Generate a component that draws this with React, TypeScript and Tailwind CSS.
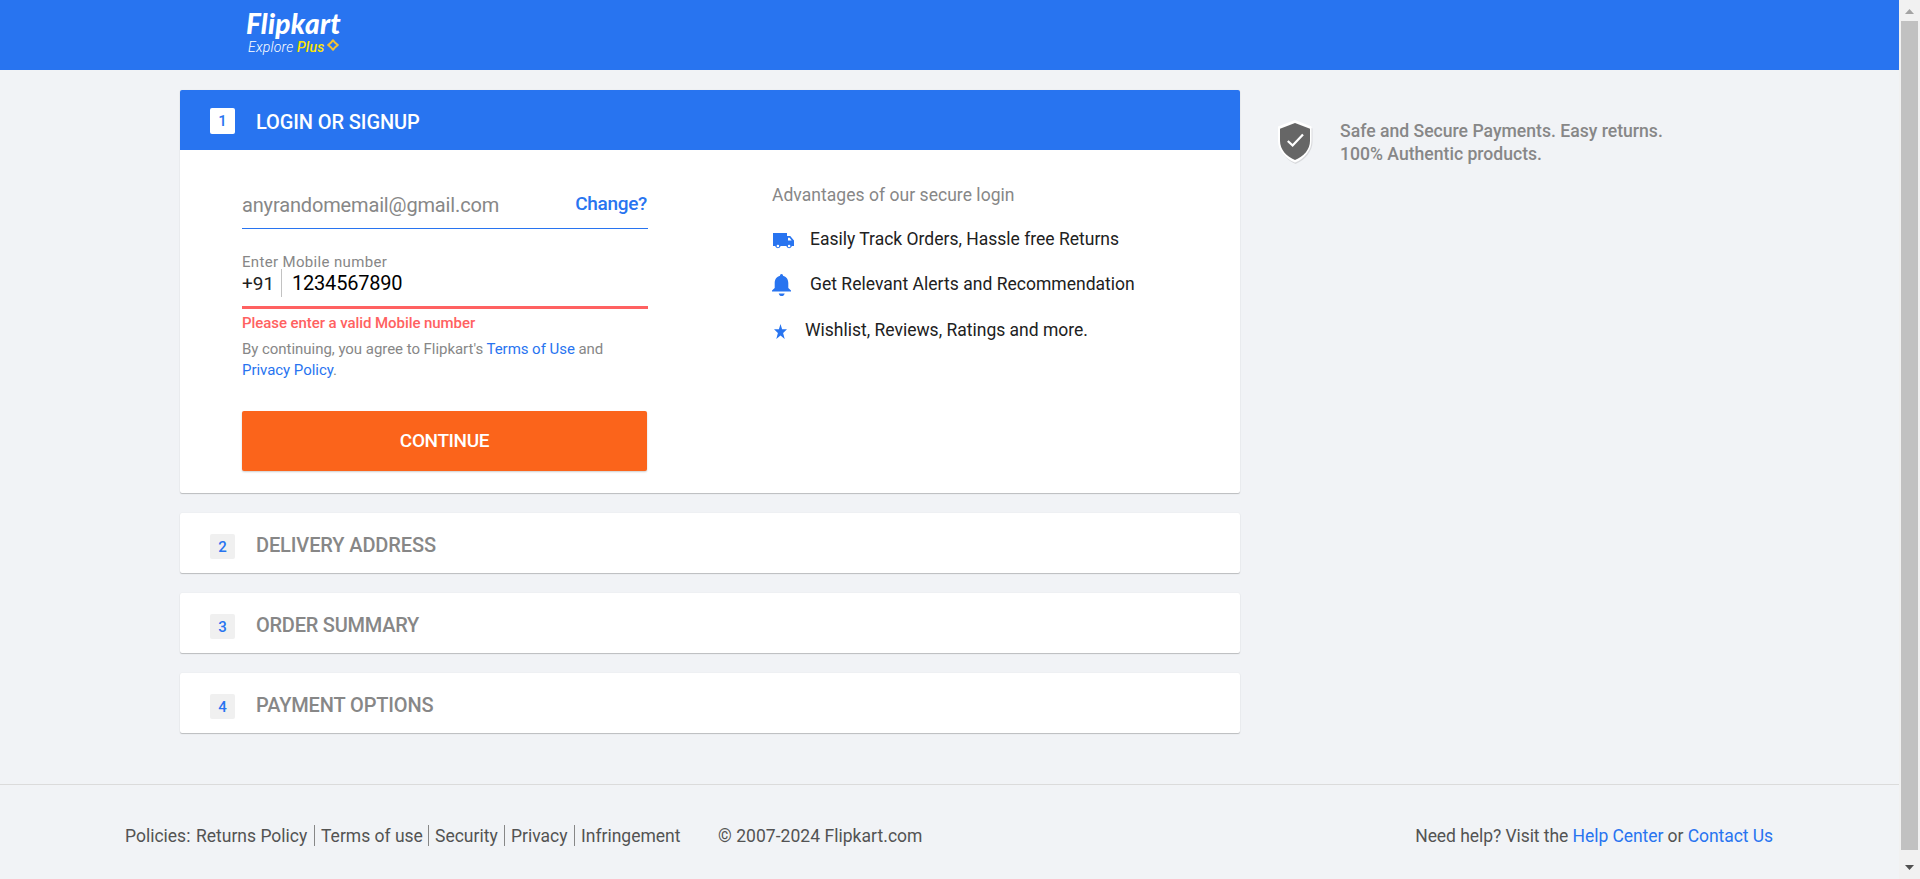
import React from "react";

const TRUCK = "M0 0H14V3H17.2L21 7.6V13H18.9A2.9 2.9 0 0 1 13.3 13H7.7A2.9 2.9 0 0 1 2.1 13H0Z";

function Header() {
  return (
    <header className="h-[70px] bg-[#2874f0] pl-[246px] pt-[10px] italic">
      <div className="h-[29px] whitespace-nowrap font-['Lato'] text-[28px] font-black leading-[27px] tracking-[0.3px] text-white">
        Flipkart
      </div>
      <div className="flex h-[16px] items-start whitespace-nowrap pl-[2px] text-[14px] leading-[16px]">
        <span className="w-[49px] font-light tracking-[0.2px] text-white">Explore</span>
        <span className="w-[30px] font-medium tracking-[0.2px] text-[#ffe500]">Plus</span>
        <svg width="12" height="12" viewBox="0 0 12 12" fill="none" stroke="#f2c233" strokeWidth="2" strokeLinejoin="round">
          <path d="M6 1.2L8.2 3.8L10.8 6L8.2 8.2L6 10.8L3.8 8.2L1.2 6L3.8 3.8Z" />
        </svg>
      </div>
    </header>
  );
}

const cardShadow = "rounded-[2px] bg-white shadow-[0_1px_1px_0_rgba(0,0,0,0.22),0_0_2px_0_rgba(0,0,0,0.06)]";

function Step({ n, title, tracking }: { n: number; title: string; tracking: string }) {
  return (
    <section className={`mt-5 flex h-[60px] pl-[30px] ${cardShadow}`}>
      <span className="mt-[21px] flex h-[25px] w-[25px] justify-center rounded-[2px] bg-[#f0f0f0] text-[15px] font-medium leading-[26px] text-[#2874f0]">
        {n}
      </span>
      <h2 className={`ml-[21px] mt-[20px] text-[20px] font-medium leading-[24px] text-[#878787] ${tracking}`}>{title}</h2>
    </section>
  );
}

function LoginForm() {
  return (
    <div className="w-[406px] whitespace-nowrap">
      <div className="flex h-[79px] items-start justify-between border-b border-[#2874f0] pt-[43px] leading-[24px]">
        <span className="text-[20px] tracking-[-0.15px] text-[#878787]">anyrandomemail@gmail.com</span>
        <span className="-mt-px mr-px text-[19px] font-medium tracking-[-0.3px] text-[#2874f0]">Change?</span>
      </div>
      <div className="mt-[24px] h-[16px] text-[15px] leading-[18px] tracking-[0.34px] text-[#878787]">Enter Mobile number</div>
      <div className="flex h-[40px] border-b-[3px] border-[#ff6161] leading-[24px]">
        <span className="mt-[3px] h-[24px] w-[39px] text-[19px] text-[#212121]">+91</span>
        <span className="h-[28px] w-px bg-[#c2c2c2]" />
        <span className="ml-[10px] mt-[2px] text-[20px] tracking-[-0.2px] text-black">1234567890</span>
      </div>
      <div className="mt-[5px] h-[18px] text-[15px] font-medium leading-[18px] tracking-[-0.07px] text-[#ff6161]">
        Please enter a valid Mobile number
      </div>
      <p className="mt-[7px] text-[15px] leading-[21px] tracking-[-0.04px] text-[#878787]">
        By continuing, you agree to Flipkart's <span className="text-[#2874f0]">Terms of Use</span> and
        <br />
        <span className="text-[#2874f0]">Privacy Policy</span>.
      </p>
      <button className="mt-[30px] block h-[60px] w-[405px] rounded-[2px] bg-[#fb641b] text-[19px] font-medium leading-[58px] tracking-[-0.38px] text-white shadow-[0_1px_2px_0_rgba(0,0,0,0.2)]">
        CONTINUE
      </button>
    </div>
  );
}

function Advantages() {
  return (
    <div className="ml-[124px] whitespace-nowrap pt-[33px] text-[17.5px] leading-[24px] text-[#212121]">
      <div className="tracking-[0.04px] text-[#878787]">Advantages of our secure login</div>
      <div className="mt-[20px] flex h-[24px]">
        <svg className="ml-px mt-[6px]" width="21" height="16" viewBox="0 0 21 16">
          <path d={TRUCK} fill="#2874f0" />
          <path d="M15 4.8H16.6L18.6 7.6H15Z" fill="#fff" />
          <circle cx="4.9" cy="13" r="1.3" fill="#fff" />
          <circle cx="16.1" cy="13" r="1.3" fill="#fff" />
        </svg>
        <span className="ml-[16px]">Easily Track Orders, Hassle free Returns</span>
      </div>
      <div className="mt-[21px] flex h-[24px]">
        <svg className="mt-[2px]" width="19" height="22" viewBox="0 0 19 22" fill="#2874f0">
          <path d="M9.5 0C10.5 0 11 .7 11 1.8C14.3 2.6 16.3 5.5 16.3 9V14L19 16.6V17.6H0V16.6L2.7 14V9C2.7 5.5 4.7 2.6 8 1.8C8 .7 8.5 0 9.5 0ZM6.7 19.4H12.7C12.3 21 11.2 22 9.7 22C8.2 22 7.1 21 6.7 19.4Z" />
        </svg>
        <span className="ml-[19px] tracking-[0.02px]">Get Relevant Alerts and Recommendation</span>
      </div>
      <div className="mt-[22px] flex h-[24px]">
        <svg className="ml-[2px] mt-[6px]" width="13" height="15" viewBox="0 0 13 15" fill="#2874f0">
          <path d="M6.5 0L8.1 5.3H13L9.1 8.9L10.7 15L6.5 11.4L2.3 15L3.9 8.9L0 5.3H4.9Z" />
        </svg>
        <span className="ml-[18px]">Wishlist, Reviews, Ratings and more.</span>
      </div>
    </div>
  );
}

function SafeBadge() {
  return (
    <aside className="ml-[37px] mt-[29px] flex">
      <svg width="37" height="46" viewBox="0 0 37 46">
        <path d="M18.5 3L35.5 9.5V23C35.5 32 28 41 18.5 45C9 41 2.5 32 2.5 23V9.5Z" fill="#d9dadd" />
        <path d="M18 1L34.5 7.5V22C34.5 31 27.5 40 18 43.5C8.5 40 1 31 1 22V7.5Z" fill="#fff" />
        <path d="M18 4L33 9.7V22C33 30.5 26.5 37.5 18 41C9.5 37.5 3 30.5 3 22V9.7Z" fill="#666" />
        <path d="M10.8 22L15.6 26.5L26 15.5" fill="none" stroke="#fff" strokeWidth="2.3" />
      </svg>
      <p className="ml-[26px] mt-px whitespace-nowrap text-[17.6px] font-medium leading-[23px] text-[#878787]">
        Safe and Secure Payments. Easy returns.
        <br />
        100% Authentic products.
      </p>
    </aside>
  );
}

function Footer() {
  const item = "mr-[6px] h-[21px] border-r border-[#878787]";
  return (
    <footer className="mt-[51px] flex h-[95px] items-start justify-between whitespace-nowrap border-t border-[#dbdbdb] pl-[125px] pr-[126px] pt-[40px] text-[17.5px] leading-[23px] text-[#535353]">
      <div className="flex">
        <span className="w-[71px]">Policies:</span>
        <span className={`w-[119px] ${item}`}>Returns Policy</span>
        <span className={`w-[108px] ${item}`}>Terms of use</span>
        <span className={`w-[70px] ${item}`}>Security</span>
        <span className={`w-[64px] ${item}`}>Privacy</span>
        <span className="w-[137px]">Infringement</span>
        <span className="tracking-[0.04px]">© 2007-2024 Flipkart.com</span>
      </div>
      <div className="tracking-[-0.06px]">
        Need help? Visit the <span className="text-[#2874f0]">Help Center</span> or <span className="text-[#2874f0]">Contact Us</span>
      </div>
    </footer>
  );
}

function Scrollbar() {
  return (
    <div className="flex w-[21px] shrink-0 flex-col items-center bg-[#f1f1f1]">
      <div className="h-[21px] pt-[9px]">
        <svg width="9" height="5" viewBox="0 0 9 5" fill="#a3a3a3"><path d="M4.5 0L9 5H0Z" /></svg>
      </div>
      <div className="h-[829px] w-[17px] bg-[#c1c1c1]" />
      <div className="pt-[15px]">
        <svg width="9" height="5" viewBox="0 0 9 5" fill="#505050"><path d="M4.5 5L9 0H0Z" /></svg>
      </div>
    </div>
  );
}

export default function App() {
  return (
    <div className="flex h-[879px] w-[1920px] overflow-hidden bg-[#f1f3f6] font-['Roboto',sans-serif]">
      <div className="w-[1899px]">
        <Header />
        <div className="flex pl-[180px] pt-5">
          <main className="w-[1060px]">
            <section className={`h-[403px] ${cardShadow}`}>
              <div className="flex h-[60px] rounded-t-[2px] bg-[#2874f0] pl-[30px]">
                <span className="mt-[18px] flex h-[26px] w-[25px] justify-center rounded-[2px] bg-white text-[15px] font-medium leading-[26px] text-[#2874f0]">
                  1
                </span>
                <h2 className="ml-[21px] mt-[20px] text-[20px] font-medium leading-[24px] tracking-[-0.1px] text-white">LOGIN OR SIGNUP</h2>
              </div>
              <div className="flex pl-[62px]">
                <LoginForm />
                <Advantages />
              </div>
            </section>
            <Step n={2} title="DELIVERY ADDRESS" tracking="tracking-[-0.12px]" />
            <Step n={3} title="ORDER SUMMARY" tracking="tracking-[-0.25px]" />
            <Step n={4} title="PAYMENT OPTIONS" tracking="tracking-[-0.13px]" />
          </main>
          <SafeBadge />
        </div>
        <Footer />
      </div>
      <Scrollbar />
    </div>
  );
}
